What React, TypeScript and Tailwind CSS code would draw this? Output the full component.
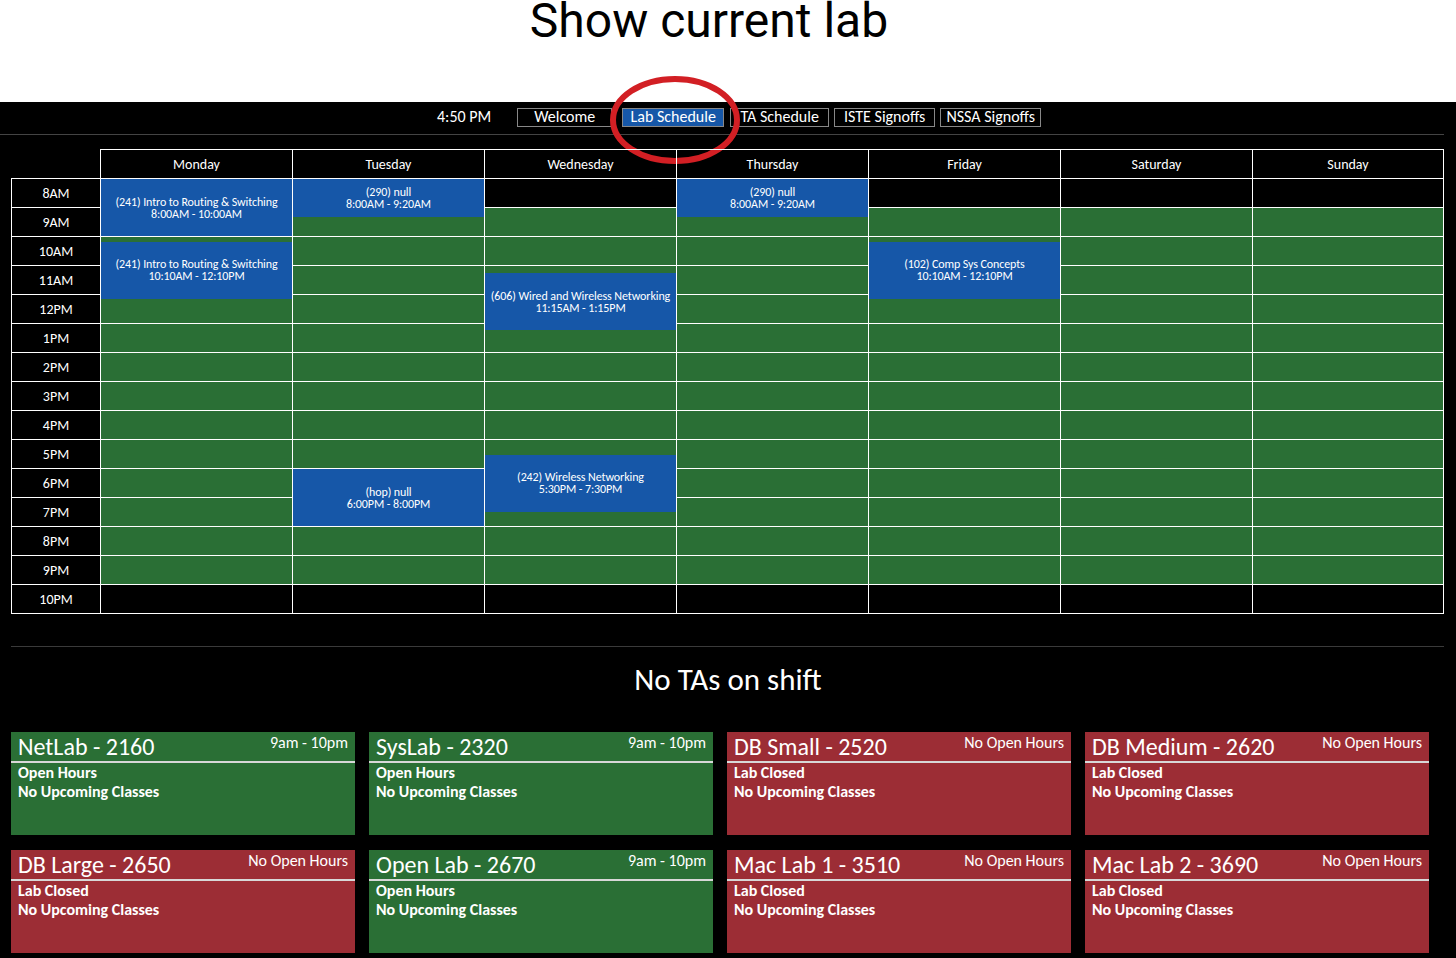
import React from 'react';

const FONT = { fontFamily: '"Carlito", "Lato", "Open Sans", sans-serif' };

type Ev = { day: number; start: number; end: number; title: string; time: string };

const days = ['Monday', 'Tuesday', 'Wednesday', 'Thursday', 'Friday', 'Saturday', 'Sunday'];
const hours = ['8AM', '9AM', '10AM', '11AM', '12PM', '1PM', '2PM', '3PM', '4PM', '5PM', '6PM', '7PM', '8PM', '9PM', '10PM'];

const events: Ev[] = [
  { day: 0, start: 8, end: 10, title: '(241) Intro to Routing & Switching', time: '8:00AM - 10:00AM' },
  { day: 0, start: 10 + 10 / 60, end: 12 + 10 / 60, title: '(241) Intro to Routing & Switching', time: '10:10AM - 12:10PM' },
  { day: 1, start: 8, end: 9 + 20 / 60, title: '(290) null', time: '8:00AM - 9:20AM' },
  { day: 1, start: 18, end: 20, title: '(hop) null', time: '6:00PM - 8:00PM' },
  { day: 2, start: 11.25, end: 13.25, title: '(606) Wired and Wireless Networking', time: '11:15AM - 1:15PM' },
  { day: 2, start: 17.5, end: 19.5, title: '(242) Wireless Networking', time: '5:30PM - 7:30PM' },
  { day: 3, start: 8, end: 9 + 20 / 60, title: '(290) null', time: '8:00AM - 9:20AM' },
  { day: 4, start: 10 + 10 / 60, end: 12 + 10 / 60, title: '(102) Comp Sys Concepts', time: '10:10AM - 12:10PM' },
];

const labs = [
  { name: 'NetLab - 2160', hours: '9am - 10pm', open: true },
  { name: 'SysLab - 2320', hours: '9am - 10pm', open: true },
  { name: 'DB Small - 2520', hours: 'No Open Hours', open: false },
  { name: 'DB Medium - 2620', hours: 'No Open Hours', open: false },
  { name: 'DB Large - 2650', hours: 'No Open Hours', open: false },
  { name: 'Open Lab - 2670', hours: '9am - 10pm', open: true },
  { name: 'Mac Lab 1 - 3510', hours: 'No Open Hours', open: false },
  { name: 'Mac Lab 2 - 3690', hours: 'No Open Hours', open: false },
];

const ROW = 29;

function DayColumn({ idx }: { idx: number }) {
  const last = idx === days.length - 1;
  return (
    <div className={`relative flex flex-col ${last ? 'w-[192px] border-r border-white' : 'w-[192px]'}`}>
      <div className="h-[29px] border-l border-t border-white flex items-center justify-center text-[14px] text-white">
        {days[idx]}
      </div>
      {hours.map((h, i) => {
        const open = i > 0 && i < hours.length - 1;
        return (
          <div
            key={h}
            className={`h-[29px] border-l border-t border-white ${open ? 'bg-[#2a6f35]' : 'bg-black'} ${
              i === hours.length - 1 ? 'h-[30px] border-b' : ''
            }`}
          />
        );
      })}
      {events
        .filter((e) => e.day === idx)
        .map((e, i) => (
          <div
            key={i}
            className="absolute left-[1px] right-0 bg-[#1657a8] flex flex-col items-center justify-center text-white text-[12px] leading-[12px] tracking-[-0.1px] text-center"
            style={{ top: ROW + 1 + (e.start - 8) * ROW, height: (e.end - e.start) * ROW - 1 }}
          >
            <div>{e.title}</div>
            <div>{e.time}</div>
          </div>
        ))}
    </div>
  );
}

export default function App() {
  return (
    <div className="w-[1456px] min-h-[958px] bg-black" style={FONT}>
      {/* title */}
      <div className="h-[102px] bg-white flex justify-center pr-[38px]">
        <h1
          className="text-[48px] leading-[52px] text-black -mt-[5px]"
          style={{ fontFamily: 'Roboto, sans-serif' }}
        >
          Show current lab
        </h1>
      </div>

      {/* nav */}
      <div className="relative w-[1444px] h-[33px] border-b border-[#444] flex items-center pl-[437px] pb-[2px] text-white text-[16px]">
        <span className="mr-[26px]">4:50 PM</span>
        <div className="w-[95px] h-[19px] border border-[#888] flex items-center justify-center leading-none mr-[10px]">Welcome</div>
        <div className="w-[102px] h-[19px] border border-[#888] bg-[#1657a8] flex items-center justify-center leading-none mr-[6px]">Lab Schedule</div>
        <div className="w-[99px] h-[19px] border border-[#888] flex items-center justify-center leading-none mr-[5px]">TA Schedule</div>
        <div className="w-[101px] h-[19px] border border-[#888] flex items-center justify-center leading-none mr-[5px]">ISTE Signoffs</div>
        <div className="w-[101px] h-[19px] border border-[#888] flex items-center justify-center leading-none">NSSA Signoffs</div>
        <svg className="absolute left-[607px] top-[-28px]" width="136" height="92" viewBox="0 0 136 92">
          <ellipse cx="68" cy="46" rx="62" ry="41" fill="none" stroke="#d21f24" strokeWidth="6" />
        </svg>
      </div>

      {/* schedule */}
      <div className="flex pl-[11px] pt-[14px]">
        <div className="flex flex-col w-[89px]">
          <div className="h-[29px]" />
          {hours.map((h, i) => (
            <div
              key={h}
              className={`h-[29px] border-l border-t border-white flex items-center justify-center text-[14px] text-white ${
                i === hours.length - 1 ? 'h-[30px] border-b' : ''
              }`}
            >
              {h}
            </div>
          ))}
        </div>
        {days.map((d, i) => (
          <DayColumn key={d} idx={i} />
        ))}
      </div>

      <div className="ml-[11px] w-[1433px] mt-[32px] border-t border-[#3a3a3a]" />

      <div className="text-center text-white text-[31px] mt-[13px] leading-[38px]">No TAs on shift</div>

      {/* labs */}
      <div className="grid grid-cols-[repeat(4,344px)] gap-x-[14px] gap-y-[15px] pl-[11px] mt-[34px]">
        {labs.map((lab) => (
          <div key={lab.name} className={`h-[103px] text-white ${lab.open ? 'bg-[#2a6f35]' : 'bg-[#9c2d35]'}`}>
            <div className="h-[31px] flex justify-between items-start px-[7px] border-b-2 border-[#d8d8d8]">
              <span className="text-[24px] leading-[28px] mt-[1px]">{lab.name}</span>
              <span className="text-[16px] leading-[18px] mt-[2px]">{lab.hours}</span>
            </div>
            <div className="px-[7px] pt-0 text-[16px] leading-[19px] font-bold">
              <div>{lab.open ? 'Open Hours' : 'Lab Closed'}</div>
              <div>No Upcoming Classes</div>
            </div>
          </div>
        ))}
      </div>
    </div>
  );
}
